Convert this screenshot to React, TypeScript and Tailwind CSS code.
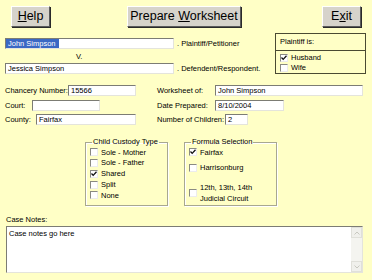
import type { ReactNode } from "react";

const FONT = { fontFamily: '"Liberation Sans", Arial, sans-serif' };

function Btn({ className, children }: { className: string; children: ReactNode }) {
  return (
    <div
      className={`h-[21px] flex items-center justify-center bg-[#d6d3cb] border border-t-white border-l-white border-r-[#5a5a5a] border-b-[#5a5a5a] shadow-[1px_1px_0_#2a2a2a] text-[12.5px] leading-none ${className}`}
    >
      {children}
    </div>
  );
}

function Field({ className, children }: { className: string; children?: ReactNode }) {
  return (
    <div
      className={`h-[11px] bg-white border border-t-[#7c7c74] border-l-[#7c7c74] border-r-[#e4e4dc] border-b-[#e4e4dc] flex items-center pl-[2px] text-[7.5px] leading-none overflow-hidden whitespace-nowrap ${className}`}
    >
      {children}
    </div>
  );
}

function Check({ checked }: { checked?: boolean }) {
  return (
    <div className="w-[8px] h-[8px] shrink-0 bg-white border border-t-[#8a8a82] border-l-[#8a8a82] border-r-[#ececec] border-b-[#ececec] flex items-center justify-center">
      {checked && (
        <svg width="6" height="6" viewBox="0 0 6 6">
          <path d="M0.5 2.5 L2.2 4.4 L5.5 0.8" stroke="#111" strokeWidth="1.3" fill="none" />
        </svg>
      )}
    </div>
  );
}

function Item({ label, checked }: { label: string; checked?: boolean }) {
  return (
    <div className="flex items-center gap-[3px] h-[10.75px] text-[7.5px] leading-none">
      <Check checked={checked} />
      <span>{label}</span>
    </div>
  );
}

export default function App() {
  return (
    <div className="w-[372px] h-[280px] bg-[#ffffc6] overflow-hidden text-black" style={FONT}>
      {/* toolbar */}
      <div className="flex items-start pt-[6px] h-[33px]">
        <Btn className="ml-[11px] w-[39px]">
          <span>
            <u>H</u>elp
          </span>
        </Btn>
        <Btn className="ml-[77px] w-[114px]">
          <span>
            Prepare <u>W</u>orksheet
          </span>
        </Btn>
        <Btn className="ml-[81px] w-[39px]">
          <span>
            E<u>x</u>it
          </span>
        </Btn>
      </div>

      {/* parties */}
      <div className="flex h-[41px]">
        <div className="w-[275px] pl-[5px] pt-[5px] text-[7.5px]">
          <div className="flex items-center h-[11px]">
            <Field className="w-[169px] !pl-0">
              <span className="bg-[#3a68c4] text-white h-full flex items-center pl-[2px] pr-[3px]">John Simpson</span>
            </Field>
            <span className="ml-[3px] leading-none">. Plaintiff/Petitioner</span>
          </div>
          <div className="h-[14px] pl-[71px] flex items-center leading-none pt-[2px]">V.</div>
          <div className="flex items-center h-[11px]">
            <Field className="w-[169px]">Jessica Simpson</Field>
            <span className="ml-[3px] leading-none">. Defendent/Respondent.</span>
          </div>
        </div>
        <div className="w-[91px] h-[41px] border border-[#4a4a32] text-[7.5px] leading-none">
          <div className="h-[17px] border-b border-[#4a4a32] flex items-center pl-[4px]">Plaintiff is:</div>
          <div className="pl-[4px] pt-[3px] flex flex-col gap-[2px]">
            <div className="flex items-center gap-[3px]">
              <Check checked />
              <span>Husband</span>
            </div>
            <div className="flex items-center gap-[3px]">
              <Check />
              <span>Wife</span>
            </div>
          </div>
        </div>
      </div>

      {/* details */}
      <div className="pt-[11px] text-[7.5px] leading-none">
        <div className="flex h-[11px] items-center">
          <div className="w-[157px] pl-[5px] flex items-center">
            <span className="w-[63px]">Chancery Number:</span>
            <Field className="w-[68px]">15566</Field>
          </div>
          <div className="flex items-center">
            <span className="w-[58px]">Worksheet of:</span>
            <Field className="w-[148px]">John Simpson</Field>
          </div>
        </div>
        <div className="flex h-[11px] items-center mt-[4px]">
          <div className="w-[157px] pl-[5px] flex items-center">
            <span className="w-[27px]">Court:</span>
            <Field className="w-[68px]" />
          </div>
          <div className="flex items-center">
            <span className="w-[58px]">Date Prepared:</span>
            <Field className="w-[69px]">8/10/2004</Field>
          </div>
        </div>
        <div className="flex h-[11px] items-center mt-[3px]">
          <div className="w-[157px] pl-[5px] flex items-center">
            <span className="w-[31px]">County:</span>
            <Field className="w-[100px]">Fairfax</Field>
          </div>
          <div className="flex items-center">
            <span className="w-[68px]">Number of Children:</span>
            <Field className="w-[23px]">2</Field>
          </div>
        </div>
      </div>

      {/* option groups */}
      <div className="flex mt-[12px] text-[7.5px] leading-none">
        <fieldset className="ml-[85px] w-[83px] h-[69px] border border-[#a8a890] shadow-[inset_1px_1px_0_#fff,1px_1px_0_#fff] pl-[4px]">
          <legend className="ml-[2px] px-[1px] leading-[10px]">Child Custody Type</legend>
          <Item label="Sole - Mother" />
          <Item label="Sole - Father" />
          <Item label="Shared" checked />
          <Item label="Split" />
          <Item label="None" />
        </fieldset>
        <fieldset className="ml-[16px] w-[93px] h-[69px] border border-[#a8a890] shadow-[inset_1px_1px_0_#fff,1px_1px_0_#fff] pl-[4px]">
          <legend className="ml-[2px] px-[1px] leading-[10px]">Formula Selection</legend>
          <Item label="Fairfax" checked />
          <div className="mt-[5px]">
            <Item label="Harrisonburg" />
          </div>
          <div className="mt-[8px] flex items-center gap-[3px]">
            <Check />
            <span className="leading-[11px]">
              12th, 13th, 14th
              <br />
              Judicial Circuit
            </span>
          </div>
        </fieldset>
      </div>

      {/* notes */}
      <div className="pl-[6px] pt-[10px] text-[7.5px] leading-none">
        <div className="h-[10px]">Case Notes:</div>
        <div className="w-[357px] h-[47px] bg-white border border-t-[#7c7c74] border-l-[#7c7c74] border-r-[#e4e4dc] border-b-[#e4e4dc] flex">
          <div className="flex-1 pl-[2px] pt-[3px]">Case notes go here</div>
          <div className="w-[11px] bg-[#f4f4f0] flex flex-col justify-between">
            <div className="h-[11px] bg-[#f0f0ec] border border-[#e0e0da] flex items-center justify-center">
              <svg width="6" height="4" viewBox="0 0 6 4">
                <path d="M0.5 3.5 L3 1 L5.5 3.5" stroke="#c8c8c0" strokeWidth="1" fill="none" />
              </svg>
            </div>
            <div className="h-[11px] bg-[#f0f0ec] border border-[#e0e0da] flex items-center justify-center">
              <svg width="6" height="4" viewBox="0 0 6 4">
                <path d="M0.5 0.5 L3 3 L5.5 0.5" stroke="#c8c8c0" strokeWidth="1" fill="none" />
              </svg>
            </div>
          </div>
        </div>
      </div>
    </div>
  );
}
